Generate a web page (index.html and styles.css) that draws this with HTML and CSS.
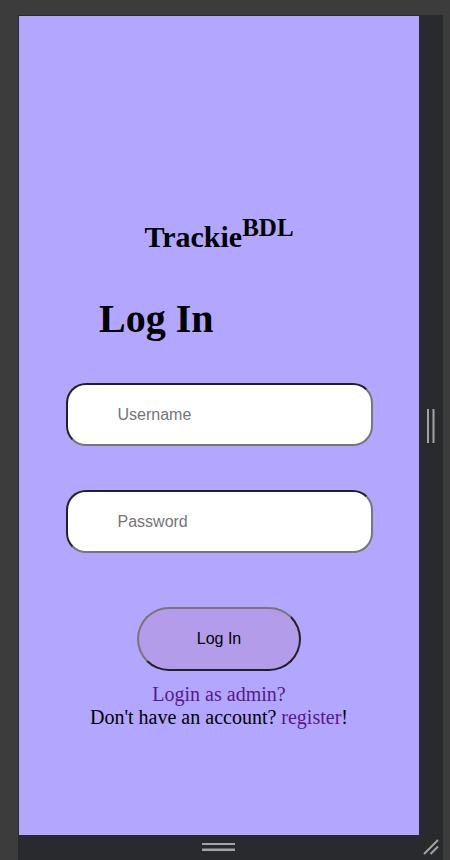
FILE: index.html
```html
<!DOCTYPE html>
<html lang="en">
<head>
<meta charset="utf-8">
<title>Trackie BDL - Log In</title>
<link rel="stylesheet" href="styles.css">
</head>
<body>
<div class="frame">
  <div class="viewport-row">
    <main class="screen">
      <h2 class="brand">Trackie<sup class="brand-sup">BDL</sup></h2>
      <h1 class="heading">Log In</h1>
      <form class="form">
        <input class="field" type="text" placeholder="Username">
        <input class="field" type="password" placeholder="Password">
        <button class="submit" type="button">Log In</button>
      </form>
      <p class="links"><a href="#" class="link">Login as admin?</a><br>Don't have an account? <a href="#" class="link">register</a>!</p>
    </main>
    <div class="side-bar">
      <svg class="side-grip" width="24" height="34" viewBox="0 0 24 34">
        <rect x="8" y="0" width="2" height="34" fill="#a3a3a3"/>
        <rect x="13.5" y="0" width="2" height="34" fill="#a3a3a3"/>
      </svg>
    </div>
  </div>
  <div class="bottom-bar">
    <div class="bottom-center">
      <svg width="34" height="10" viewBox="0 0 34 10">
        <rect x="0" y="1" width="33" height="2" fill="#a3a3a3"/>
        <rect x="0" y="6.5" width="33" height="2.5" fill="#a3a3a3"/>
      </svg>
    </div>
    <div class="bottom-corner">
      <svg width="24" height="25" viewBox="0 0 24 25">
        <line x1="5" y1="19" x2="19" y2="5" stroke="#a3a3a3" stroke-width="2"/>
        <line x1="11.5" y1="19" x2="19" y2="11.5" stroke="#a3a3a3" stroke-width="2"/>
      </svg>
    </div>
  </div>
</div>
</body>
</html>
```

FILE: styles.css
```css
html, body {
  margin: 0;
  padding: 0;
}

body {
  width: 450px;
  height: 860px;
  overflow: hidden;
  background: #3c3c3c;
}

.frame {
  margin: 15px 0 0 18px;
  width: 425px;
  background: #292a2d;
  padding: 1px 0 0 1px;
  box-sizing: border-box;
  display: flex;
  flex-direction: column;
}

.viewport-row {
  display: flex;
}

.screen {
  width: 400px;
  height: 819px;
  background: #b3a6ff;
  display: flex;
  flex-direction: column;
  align-items: center;
  padding-top: 205px;
  box-sizing: border-box;
  font-family: "Liberation Serif", "Times New Roman", serif;
  color: #000;
}

.brand {
  margin: 0;
  font-size: 30px;
  line-height: 32px;
  height: 32px;
  font-weight: bold;
  text-align: center;
}

.brand-sup {
  font-size: 25px;
  line-height: 0;
  vertical-align: super;
}

.heading {
  align-self: flex-start;
  margin: 42.5px 0 0 80px;
  font-size: 40px;
  line-height: 46px;
  font-weight: bold;
}

.form {
  margin: 41.5px 0 0;
  display: flex;
  flex-direction: column;
  align-items: center;
}

.field {
  width: 307px;
  height: 63px;
  box-sizing: border-box;
  border: 2px inset #767676;
  border-radius: 20px;
  background: #fff;
  padding: 0 0 0 50px;
  font-family: "Liberation Sans", Arial, sans-serif;
  font-size: 16px;
  color: #000;
  outline: none;
}

.field + .field {
  margin-top: 44px;
}

.field::placeholder {
  color: #757575;
}

.submit {
  margin-top: 54px;
  width: 164px;
  height: 64px;
  box-sizing: border-box;
  border: 2px outset #767676;
  border-radius: 32px;
  background: #b39deb;
  font-family: "Liberation Sans", Arial, sans-serif;
  font-size: 16px;
  color: #000;
  padding: 0;
}

.links {
  margin: 12px 0 0;
  font-size: 20px;
  line-height: 23px;
  text-align: center;
}

.link {
  color: #551a8b;
  text-decoration: none;
}

.side-bar {
  flex: 1;
  display: flex;
  align-items: center;
  justify-content: center;
}

.side-grip {
  display: block;
}

.bottom-bar {
  height: 26px;
  display: flex;
}

.bottom-center {
  width: 400px;
  display: flex;
  justify-content: center;
  padding-top: 7px;
  box-sizing: border-box;
}

.bottom-center svg,
.bottom-corner svg {
  display: block;
}

.bottom-corner {
  flex: 1;
}
```
